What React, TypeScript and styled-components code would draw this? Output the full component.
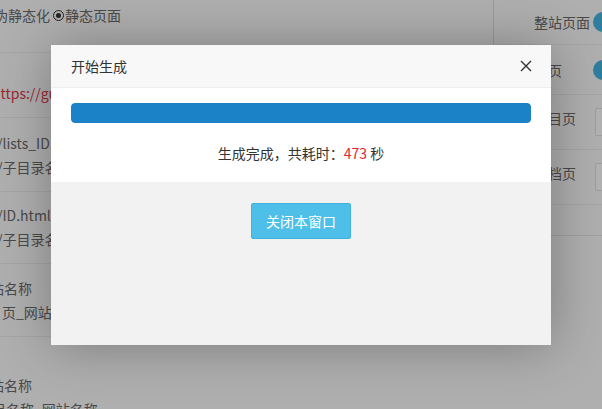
import React from "react";
import styled, { createGlobalStyle } from "styled-components";

const Global = createGlobalStyle`
  html, body { margin: 0; padding: 0; }
  body {
    font-family: "Noto Sans CJK SC", "Noto Sans", "Liberation Sans", sans-serif;
    font-size: 14px;
    color: #666;
  }
`;

const Page = styled.div`
  position: relative;
  width: 602px;
  height: 409px;
  overflow: hidden;
  background: #fbfbfb;
  display: flex;
`;

const Main = styled.div`
  width: 493px;
  flex: none;
  display: flex;
  flex-direction: column;
`;

const Row = styled.div<{ $h: number; $pt: number }>`
  flex: none;
  height: ${(p) => p.$h}px;
  padding-top: ${(p) => p.$pt}px;
  box-sizing: border-box;
  border-bottom: 1px solid #ececec;
`;

const Line = styled.div<{ $shift: number; $red?: boolean }>`
  margin-left: ${(p) => p.$shift}px;
  height: 24px;
  line-height: 24px;
  white-space: nowrap;
  color: ${(p) => (p.$red ? "#e0384a" : "#6a6a6a")};
  display: flex;
  align-items: center;
`;

const Radio = styled.span<{ $on?: boolean }>`
  width: 11px;
  height: 11px;
  box-sizing: border-box;
  border-radius: 50%;
  border: 1.5px solid #333;
  margin: 0 1px 0 3px;
  display: inline-flex;
  align-items: center;
  justify-content: center;
  &::after {
    content: "";
    width: 5px;
    height: 5px;
    border-radius: 50%;
    background: ${(p) => (p.$on ? "#333" : "transparent")};
  }
`;

const Side = styled.div`
  width: 140px;
  flex: none;
  align-self: flex-start;
  border-left: 1px solid #ddd;
  border-bottom: 1px solid #e6e6e6;
  display: flex;
  flex-direction: column;
`;

const SideRow = styled.div<{ $h: number }>`
  height: ${(p) => p.$h}px;
  box-sizing: border-box;
  border-bottom: 1px solid #ececec;
  display: flex;
  align-items: center;
  &:last-child { border-bottom: none; }
`;

const SideLabel = styled.div<{ $lift?: number }>`
  width: 58px;
  padding-left: 40px;
  margin-bottom: ${(p) => (p.$lift ?? 0) * 2}px;
  flex: none;
  color: #6a6a6a;
  white-space: nowrap;
`;

const Knob = styled.span`
  width: 20px;
  height: 20px;
  border-radius: 50%;
  background: #44b4e4;
  margin-left: 1px;
  flex: none;
`;

const Field = styled.span`
  width: 60px;
  height: 28px;
  box-sizing: border-box;
  border: 1px solid #e2e2e2;
  background: #fff;
  border-radius: 2px;
  margin-left: 3px;
  flex: none;
`;

const Shade = styled.div`
  position: absolute;
  inset: 0;
  background: rgba(0, 0, 0, 0.3);
`;

const Modal = styled.div`
  position: absolute;
  left: 51px;
  top: 45px;
  width: 500px;
  height: 300px;
  background: #f2f2f2;
  box-shadow: 1px 1px 50px rgba(0, 0, 0, 0.3);
  display: flex;
  flex-direction: column;
`;

const Header = styled.div`
  height: 43px;
  flex: none;
  box-sizing: border-box;
  padding: 0 19px 0 20px;
  background: #f8f8f8;
  border-bottom: 1px solid #eee;
  display: flex;
  align-items: center;
  justify-content: space-between;
  font-size: 14px;
  color: #333;
`;

const Close = styled.button`
  border: 0;
  background: none;
  padding: 0;
  width: 12px;
  height: 12px;
  display: flex;
  cursor: pointer;
`;

const Body = styled.div`
  background: #fff;
  padding: 15px 20px 19px;
  flex: none;
`;

const Bar = styled.div`
  height: 20px;
  border-radius: 4px;
  background: #e2e2e2;
  overflow: hidden;
`;

const Fill = styled.div`
  height: 100%;
  background: #1c82c7;
  border-radius: 4px;
`;

const Status = styled.div`
  margin-top: 20px;
  height: 20px;
  line-height: 20px;
  text-align: center;
  font-size: 14px;
  color: #333;
`;

const Num = styled.span`
  color: #e8262f;
`;

const Footer = styled.div`
  flex: 1;
  display: flex;
  justify-content: center;
  align-items: flex-start;
  padding-top: 21px;
`;

const Button = styled.button`
  width: 100px;
  height: 36px;
  box-sizing: border-box;
  border: 1px solid #3fb3dd;
  border-radius: 2px;
  background: #4ebfe8;
  color: #fff;
  font-family: "Noto Sans CJK SC", sans-serif;
  font-size: 14px;
  cursor: pointer;
`;

export default function App() {
  const progress = 100;
  return (
    <>
      <Global />
      <Page>
        <Main>
          <Row $h={53} $pt={3}>
            <Line $shift={-6}>
              伪静态化<Radio $on />静态页面
            </Line>
          </Row>
          <Row $h={65} $pt={28}>
            <Line $shift={-8} $red>
              https://guide.example.com/
            </Line>
          </Row>
          <Row $h={74} $pt={13}>
            <Line $shift={-3}>/lists_ID.html</Line>
            <Line $shift={-3}>/子目录名/lists_ID.html</Line>
          </Row>
          <Row $h={72} $pt={11}>
            <Line $shift={-3}>/ID.html</Line>
            <Line $shift={-3}>/子目录名/ID.html</Line>
          </Row>
          <Row $h={73} $pt={12}>
            <Line $shift={-10}>站名称</Line>
            <Line $shift={2}>页_网站名称</Line>
          </Row>
          <Row $h={90} $pt={36}>
            <Line $shift={-10}>站名称</Line>
            <Line $shift={-8}>目名称_网站名称</Line>
          </Row>
        </Main>
        <Side>
          <SideRow $h={45}>
            <SideLabel>整站页面</SideLabel>
            <Knob />
          </SideRow>
          <SideRow $h={50}>
            <SideLabel>首页</SideLabel>
            <Knob />
          </SideRow>
          <SideRow $h={55}>
            <SideLabel $lift={4}>栏目页</SideLabel>
            <Field />
          </SideRow>
          <SideRow $h={55}>
            <SideLabel $lift={4}>文档页</SideLabel>
            <Field />
          </SideRow>
          <SideRow $h={30} />
        </Side>
        <Shade />
        <Modal>
          <Header>
            <span>开始生成</span>
            <Close aria-label="关闭">
              <svg width="12" height="12" viewBox="0 0 12 12">
                <path d="M1 1 L11 11 M11 1 L1 11" stroke="#333" strokeWidth="1.4" fill="none" />
              </svg>
            </Close>
          </Header>
          <Body>
            <Bar>
              <Fill style={{ width: `${progress}%` }} />
            </Bar>
            <Status>
              生成完成，共耗时：<Num>473</Num> 秒
            </Status>
          </Body>
          <Footer>
            <Button>关闭本窗口</Button>
          </Footer>
        </Modal>
      </Page>
    </>
  );
}
